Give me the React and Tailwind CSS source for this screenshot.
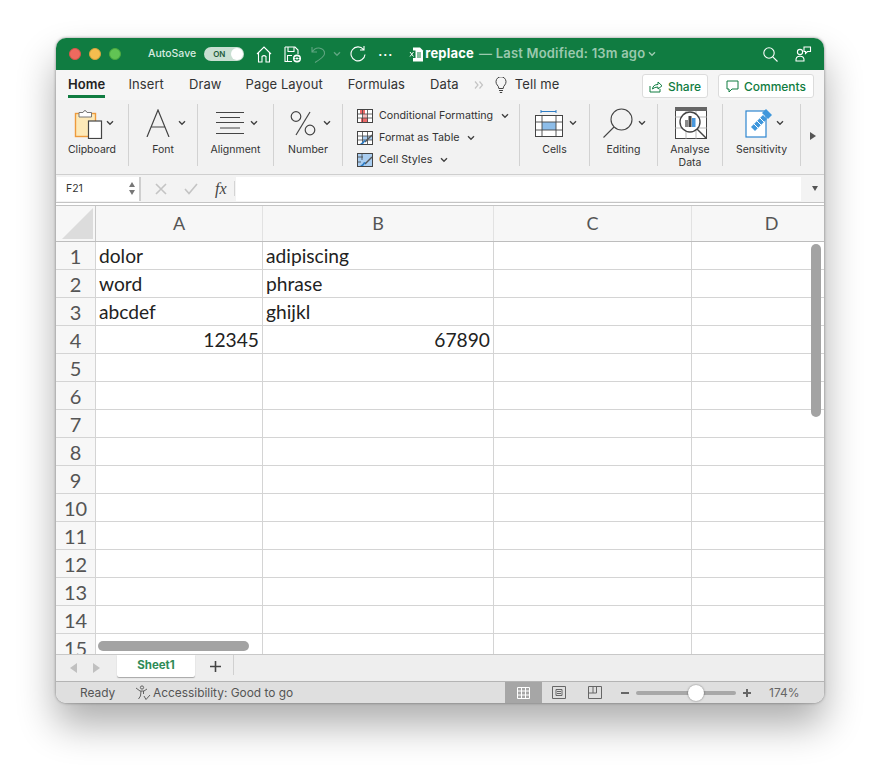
import React from 'react';

const cols = ['A', 'B', 'C', 'D'];
const gridCols = 'grid grid-cols-[40px_167px_231px_198px_160px] grid-rows-[1fr]';

const rows = [
  ['dolor', 'adipiscing'],
  ['word', 'phrase'],
  ['abcdef', 'ghijkl'],
  ['12345', '67890'],
];

const Chevron = ({ className = '', color = '#444' }) => (
  <svg width="8" height="6" viewBox="0 0 8 6" className={className}>
    <path d="M1 1.2 L4 4.2 L7 1.2" fill="none" stroke={color} strokeWidth="1.4" />
  </svg>
);

const HomeIcon = () => (
  <svg width="16" height="17" viewBox="0 0 16 17" fill="none" stroke="#fff" strokeWidth="1.1">
    <path d="M1 8 L8 1 L15 8 M2.5 7 V16 H6 V10.5 Q8 8.8 10 10.5 V16 H13.5 V7" />
  </svg>
);

const SaveIcon = () => (
  <svg width="18" height="17" viewBox="0 0 18 17" fill="none" stroke="#fff" strokeWidth="1.1">
    <path d="M1 1 H11 L14 4 V8 M8 15.5 H1 V1 M4 1 V5.5 H10 V1 M3.5 15.5 V9.5 H8" />
    <circle cx="13" cy="12.5" r="4" fill="#fff" stroke="none" />
    <path d="M10.8 12 Q13 9.8 15.2 12 M15.2 13 Q13 15.2 10.8 13" stroke="#107c41" />
  </svg>
);

const UndoIcon = () => (
  <svg width="15" height="17" viewBox="0 0 15 17" fill="none" stroke="#5fa581" strokeWidth="1.1">
    <path d="M1 1 V6 H6 M1 6 Q4 1.5 8 2 Q14 3 13.5 8 Q13 11 4 16.5" />
  </svg>
);

const RedoIcon = () => (
  <svg width="16" height="16" viewBox="0 0 16 16" fill="none" stroke="#fff" strokeWidth="1.1">
    <path d="M13.5 3.5 A7 7 0 1 0 15 8.5 M14 0 V4 H10" />
  </svg>
);

const FileIcon = () => (
  <svg width="16" height="15" viewBox="0 0 16 15">
    <path d="M5 0.5 H12 L15 3.5 V14.5 H5 Z" fill="#fff" />
    <rect x="0.5" y="3.5" width="7" height="7.5" fill="#107c41" />
    <path d="M2 5 L5.5 9.5 M5.5 5 L2 9.5" stroke="#fff" strokeWidth="1" />
    <path d="M9 6 H13 M9 8 H13 M9 10 H13" stroke="#107c41" strokeWidth="1" />
  </svg>
);

const SearchIcon = () => (
  <svg width="15" height="15" viewBox="0 0 15 15" fill="none" stroke="#fff" strokeWidth="1.1">
    <circle cx="6" cy="6" r="5.2" />
    <path d="M9.8 9.8 L14.5 14.5" />
  </svg>
);

const PeopleIcon = () => (
  <svg width="17" height="16" viewBox="0 0 17 16" fill="none" stroke="#fff" strokeWidth="1.1">
    <circle cx="5" cy="6" r="2.6" />
    <path d="M1 15 Q0.5 10.2 5 10.2 Q9.5 10.2 9 15 Z" />
    <path d="M9 1 H15.5 V5.5 H12.5 L10.5 7.5 V5.5 H9 Z" fill="#107c41" />
  </svg>
);

const BulbIcon = () => (
  <svg width="12" height="17" viewBox="0 0 12 17" fill="none" stroke="#444" strokeWidth="1">
    <path d="M3.8 11.5 Q3.8 9.5 2.2 8 A5 5 0 1 1 9.8 8 Q8.2 9.5 8.2 11.5 Z M4 13.5 H8 M4.8 15.5 H7.2" />
  </svg>
);

const DoubleChevron = () => (
  <svg width="10" height="8" viewBox="0 0 10 8" fill="none" stroke="#c4c4c4" strokeWidth="1.2">
    <path d="M1 0.5 L4 4 L1 7.5 M5.5 0.5 L8.5 4 L5.5 7.5" />
  </svg>
);

const ShareIcon = () => (
  <svg width="14" height="13" viewBox="0 0 14 13" fill="none" stroke="#107c41" strokeWidth="1">
    <path d="M1 6 V12 H11 V9 M3.5 9 Q4 4.5 9 4.5 V2 L13 5.8 L9 9 V7 Q5.5 7 3.5 9 Z" />
  </svg>
);

const CommentIcon = () => (
  <svg width="13" height="13" viewBox="0 0 13 13" fill="none" stroke="#107c41" strokeWidth="1">
    <path d="M1 1 H12 V9 H6 L3 12 V9 H1 Z" />
  </svg>
);

const ClipboardIcon = () => (
  <svg width="32" height="32" viewBox="0 0 32 32">
    <rect x="1.5" y="6.5" width="20" height="23" fill="#fde9b8" stroke="#ed9a3c" strokeWidth="1.4" />
    <path d="M5 10 V5.5 H9 Q11 1.5 13 5.5 H17.5 V10 Z" fill="#fff" stroke="#777" strokeWidth="1" />
    <rect x="14.5" y="14" width="13" height="17.5" fill="#fff" stroke="#444" strokeWidth="1.2" />
  </svg>
);

const FontIcon = () => (
  <svg width="24" height="28" viewBox="0 0 24 28" fill="none" stroke="#444" strokeWidth="1.2">
    <path d="M1 28 L12 1 L23 28 M5 18 H19" />
  </svg>
);

const AlignIcon = () => (
  <svg width="29" height="22" viewBox="0 0 29 22" fill="none" stroke="#444" strokeWidth="1">
    <path d="M0 0.5 H28 M4 5.5 H24 M0 10.5 H28 M4 16 H24 M0 21.5 H28" />
  </svg>
);

const PercentIcon = () => (
  <svg width="26" height="26" viewBox="0 0 26 26" fill="none" stroke="#444" strokeWidth="1.2">
    <circle cx="6" cy="6.5" r="4.8" />
    <circle cx="20" cy="20" r="4.8" />
    <path d="M20 2 L6 25" />
  </svg>
);

const ConditionalIcon = () => (
  <svg width="16" height="14" viewBox="0 0 16 14">
    <rect x="0.5" y="0.5" width="15" height="13" fill="#fff" stroke="#444" />
    <rect x="3" y="1" width="5" height="4" fill="#ee6a6a" />
    <rect x="6" y="5" width="4" height="4" fill="#f8b9b9" />
    <rect x="4" y="9" width="7" height="4" fill="#ee6a6a" />
    <path d="M5.5 0 V14 M10.5 0 V14 M0 5 H16 M0 9 H16" stroke="#444" strokeWidth="0.8" />
  </svg>
);

const TableStyleIcon = ({ fill = false }) => (
  <svg width="16" height="14" viewBox="0 0 16 14">
    <rect x="0.5" y="0.5" width="15" height="13" fill={fill ? '#a9cdf0' : '#fff'} stroke="#444" />
    {!fill && <rect x="5" y="5" width="10" height="4" fill="#a9cdf0" />}
    {!fill && <path d="M5.5 0 V14 M10.5 0 V14 M0 5 H16 M0 9 H16" stroke="#444" strokeWidth="0.8" />}
    {fill && <path d="M0 4 H6 M0 9 H4 M5 0 V7" stroke="#444" strokeWidth="0.8" />}
    <path d="M15 4 L8 11" stroke="#555" strokeWidth="1.4" />
    <path d="M9 9.5 L6 13 H3 Q6 11 7 9 Z" fill="#2e7cc4" />
  </svg>
);

const CellsIcon = () => (
  <svg width="28" height="27" viewBox="0 0 28 27" fill="none">
    <path d="M6 1.5 H21 M6 0 V3 M21 0 V3" stroke="#2e7cc4" strokeWidth="1" />
    <rect x="0.5" y="5.5" width="27" height="21" fill="#fff" stroke="#444" />
    <rect x="7" y="12" width="14" height="8" fill="#8dbde9" />
    <path d="M7 5 V27 M21 5 V27 M0 12 H28 M0 20 H28" stroke="#444" strokeWidth="0.9" />
  </svg>
);

const MagnifierIcon = () => (
  <svg width="32" height="30" viewBox="0 0 32 30" fill="none" stroke="#444" strokeWidth="1.1">
    <circle cx="18.5" cy="11.5" r="10.5" />
    <path d="M11 19 L0.5 29.5" />
  </svg>
);

const AnalyseIcon = () => (
  <svg width="32" height="32" viewBox="0 0 32 32" fill="none">
    <rect x="0.5" y="0.5" width="31" height="31" fill="#fff" stroke="#444" />
    <rect x="0" y="0" width="32" height="4" fill="#666" />
    <path d="M11 4 V32 M21 4 V32 M0 10 H32 M0 21 H32" stroke="#aaa" strokeWidth="0.8" />
    <circle cx="15" cy="15" r="10" fill="#fff" stroke="#444" strokeWidth="1.4" />
    <rect x="10" y="13" width="3" height="7" fill="#888" />
    <rect x="13.5" y="9" width="3" height="11" fill="#444" />
    <rect x="17" y="11" width="3.5" height="9" fill="#4a98dc" />
    <path d="M22 22 L31 31" stroke="#444" strokeWidth="1.4" />
  </svg>
);

const SensitivityIcon = () => (
  <svg width="28" height="30" viewBox="0 0 28 30" fill="none">
    <rect x="1" y="3" width="20" height="26" fill="#fff" stroke="#2e86d0" strokeWidth="1.2" />
    <path d="M6 19 L18 7 L22 11 L10 23 Z" fill="#3f97dc" />
    <path d="M9 16 L13 20 M12 13 L16 17 M15 10 L19 14" stroke="#fff" strokeWidth="1" />
    <path d="M17 5 L21 1 L27 7 L23 11 Z" fill="#3f97dc" />
  </svg>
);

const RibbonGroup = ({ width, label, icon, iconClass = '', chevronClass, children, labelClass = '' }) => (
  <div className={`${width} h-[62px] mt-1 border-r border-[#d2d2d2] shrink-0 flex flex-col items-center`}>
    {children || (
      <>
        <div className={`h-[38px] shrink-0 w-full flex items-center ${iconClass}`}>
          {icon}
          {chevronClass !== 'none' && <Chevron className={chevronClass} />}
        </div>
        <div className={`shrink-0 text-[10.5px] leading-[13px] text-center text-[#333] mt-[1px] ${labelClass}`}>{label}</div>
      </>
    )}
  </div>
);

const StyleRow = ({ icon, label }) => (
  <div className="flex items-center h-[22px]">
    {icon}
    <span className="ml-[6px] mr-[8px] text-[10.7px] text-[#333]">{label}</span>
    <Chevron />
  </div>
);

const App = () => {
  return (
    <div className="w-[880px] h-[777px] bg-white pl-[56px] pt-[38px] font-['Inter','Liberation_Sans',sans-serif]">
      <div className="relative w-[768px] h-[665px] rounded-[10px] overflow-hidden bg-white flex flex-col shadow-[0_22px_38px_rgba(0,0,0,0.32),0_0_3px_rgba(0,0,0,0.45)]">
        {/* title bar */}
        <div className="h-[32px] shrink-0 bg-[#107c41] flex items-center pl-[13px]">
          <span className="w-3 h-3 rounded-full bg-[#ee6a5f] border border-[#d9544a]" />
          <span className="w-3 h-3 rounded-full bg-[#f5bd4f] border border-[#d9a23e] ml-2" />
          <span className="w-3 h-3 rounded-full bg-[#61c454] border border-[#4ca93f] ml-2" />
          <span className="ml-[27px] text-[10.5px] font-medium text-[#d8ebe0]">AutoSave</span>
          <div className="ml-[8px] w-[40px] h-[14px] rounded-full bg-[#c9dfd2] flex items-center justify-between pl-[9px] pr-[1px]">
            <span className="text-[8px] font-semibold text-[#1d5b3a]">ON</span>
            <span className="w-[12px] h-[12px] rounded-full bg-white" />
          </div>
          <span className="ml-[12px] flex"><HomeIcon /></span>
          <span className="ml-[12px] flex"><SaveIcon /></span>
          <span className="ml-[9px] flex"><UndoIcon /></span>
          <Chevron className="ml-[7px]" color="#5fa581" />
          <span className="ml-[9px] flex"><RedoIcon /></span>
          <span className="ml-[12px] text-white text-[12px] font-bold tracking-[1px] leading-none mb-[4px]">...</span>
          <span className="ml-[15px] flex"><FileIcon /></span>
          <span className="ml-[1px] text-[13px] tracking-[0.2px] font-bold text-white">replace</span>
          <span className="ml-[5px] text-[13px] tracking-[0.2px] font-semibold text-[#9bc9ae]">— Last Modified: 13m ago</span>
          <Chevron className="ml-[3px]" color="#9bc9ae" />
          <span className="ml-auto flex"><SearchIcon /></span>
          <span className="ml-[17px] mr-[12px] flex"><PeopleIcon /></span>
        </div>

        {/* tabs */}
        <div className="h-[30px] shrink-0 bg-[#f5f5f5] flex items-center pl-[12px] relative text-[13px] tracking-[0.1px] text-[#333]">
          <span className="font-semibold text-[#222] relative">
            Home
            <span className="absolute left-0 right-0 -bottom-[3px] h-[3px] bg-[#107c41]" />
          </span>
          <span className="ml-[23px]">Insert</span>
          <span className="ml-[25px]">Draw</span>
          <span className="ml-[24px]">Page Layout</span>
          <span className="ml-[25px]">Formulas</span>
          <span className="ml-[25px]">Data</span>
          <span className="ml-[15px] flex"><DoubleChevron /></span>
          <span className="ml-[11px] flex"><BulbIcon /></span>
          <span className="ml-[8px]">Tell me</span>
          <div className="ml-auto flex items-center gap-[10px] mr-[10px] mt-[2px] tracking-normal">
            <div className="w-[66px] h-[24px] pt-[1px] bg-white border border-[#dcdcdc] rounded-[3px] flex items-center justify-center gap-[5px] text-[12px] font-medium text-[#107c41]">
              <ShareIcon />
              Share
            </div>
            <div className="w-[96px] h-[24px] pt-[1px] bg-white border border-[#dcdcdc] rounded-[3px] flex items-center justify-center gap-[5px] text-[12px] font-medium text-[#107c41]">
              <CommentIcon />
              Comments
            </div>
          </div>
        </div>

        {/* ribbon */}
        <div className="h-[75px] shrink-0 bg-[#f2f2f2] flex border-b border-[#cfcfcf]">
          <RibbonGroup width="w-[73px]" label="Clipboard" icon={<ClipboardIcon />} iconClass="pl-[18px]" chevronClass="" />
          <RibbonGroup width="w-[69px]" label="Font" icon={<FontIcon />} iconClass="pl-[17px]" chevronClass="ml-[8px]" />
          <RibbonGroup width="w-[76px]" label="Alignment" icon={<AlignIcon />} iconClass="pl-[18px]" chevronClass="ml-[5px]" />
          <RibbonGroup width="w-[69px]" label="Number" icon={<PercentIcon />} iconClass="pl-[16px]" chevronClass="ml-[7px]" />
          <RibbonGroup width="w-[177px]">
            <div className="w-full pl-[14px] pt-[1px]">
              <StyleRow icon={<ConditionalIcon />} label="Conditional Formatting" />
              <StyleRow icon={<TableStyleIcon />} label="Format as Table" />
              <StyleRow icon={<TableStyleIcon fill />} label="Cell Styles" />
            </div>
          </RibbonGroup>
          <RibbonGroup width="w-[70px]" label="Cells" icon={<CellsIcon />} iconClass="pl-[15px]" chevronClass="ml-[6px]" />
          <RibbonGroup width="w-[68px]" label="Editing" icon={<MagnifierIcon />} iconClass="pl-[13px]" chevronClass="ml-[3px]" />
          <RibbonGroup width="w-[65px]" label="Analyse Data" icon={<AnalyseIcon />} iconClass="pl-[17px]" chevronClass="none" labelClass="w-[50px]" />
          <RibbonGroup width="w-[78px]" label="Sensitivity" icon={<SensitivityIcon />} iconClass="pl-[22px]" chevronClass="ml-[3px]" />
          <div className="flex-1 flex items-center justify-center pb-[2px]">
            <span className="w-0 h-0 border-y-[4px] border-y-transparent border-l-[6px] border-l-[#555]" />
          </div>
        </div>

        {/* formula bar */}
        <div className="h-[27px] shrink-0 bg-[#f3f3f3] flex items-center pl-[1px]">
          <div className="w-[84px] h-[24px] bg-white border-r-2 border-[#cfcfcf] flex items-center justify-between pl-[9px] pr-[4px]">
            <span className="text-[10.5px] text-[#333]">F21</span>
            <div className="flex flex-col gap-[3px]">
              <span className="w-0 h-0 border-x-[3.5px] border-x-transparent border-b-[5px] border-b-[#777]" />
              <span className="w-0 h-0 border-x-[3.5px] border-x-transparent border-t-[5px] border-t-[#777]" />
            </div>
          </div>
          <svg width="12" height="12" viewBox="0 0 12 12" className="ml-[14px]" stroke="#c4c4c4" strokeWidth="1.6">
            <path d="M1 1 L11 11 M11 1 L1 11" />
          </svg>
          <svg width="14" height="12" viewBox="0 0 14 12" className="ml-[17px]" stroke="#c4c4c4" strokeWidth="1.6" fill="none">
            <path d="M1 6 L5 10.5 L13 1" />
          </svg>
          <span className="ml-[17px] w-[16px] text-[16px] italic text-[#444] font-['Liberation_Serif',serif]">fx</span>
          <span className="ml-[3px] w-px h-[15px] bg-[#d4d4d4]" />
          <div className="ml-[1px] w-[565px] h-[24px] bg-white" />
          <span className="ml-[11px] w-0 h-0 border-x-[3.5px] border-x-transparent border-t-[5px] border-t-[#555]" />
        </div>

        {/* sheet */}
        <div className="h-[2px] shrink-0 border-y border-[#c4c4c4] bg-white box-content" />
        <div className={`${gridCols} h-[36px] shrink-0 bg-[#f7f7f7] border-b border-[#bdbdbd]`}>
          <div className="border-r border-[#c8c8c8] relative">
            <span className="absolute right-[2px] bottom-[2px] w-0 h-0 border-l-[31px] border-l-transparent border-b-[31px] border-b-[#dcdcdc]" />
          </div>
          {cols.map((col) => (
            <div key={col} className="border-r border-[#e2e2e2] flex items-center justify-center text-[18px] text-[#555] font-['Lato',sans-serif]">
              {col}
            </div>
          ))}
        </div>
        <div className="relative h-[412px] shrink-0 overflow-hidden">
          {Array.from({ length: 15 }, (_, i) => {
            const row = rows[i] || [];
            const numeric = i === 3;
            return (
              <div key={i} className={`${gridCols} h-[28px] font-['Lato',sans-serif] text-[19.2px] leading-none text-[#222]`}>
                <div className="border-r border-b border-[#d4d4d4] bg-[#f7f7f7] flex items-center justify-center pt-[1px] text-[20px] text-[#555]">{i + 1}</div>
                <div className={`border-r border-b border-[#d4d4d4] flex items-center px-[3px] ${numeric ? 'justify-end' : ''}`}>{row[0]}</div>
                <div className={`border-r border-b border-[#d4d4d4] flex items-center px-[3px] ${numeric ? 'justify-end' : ''}`}>{row[1]}</div>
                <div className="border-r border-b border-[#d4d4d4]" />
                <div className="border-b border-[#d4d4d4]" />
              </div>
            );
          })}
          <div className="absolute left-[42px] bottom-[3px] w-[151px] h-[10px] rounded-full bg-[#a3a3a3]" />
          <div className="absolute right-[3px] top-[2px] w-[10px] h-[173px] rounded-full bg-[#a3a3a3]" />
        </div>

        {/* sheet tabs */}
        <div className="h-[27px] shrink-0 bg-[#eeeeee] border-t border-[#c8c8c8] flex items-start">
          <span className="ml-[14px] mt-[8px] w-0 h-0 border-y-[5px] border-y-transparent border-r-[7px] border-r-[#c0c0c0]" />
          <span className="ml-[16px] mt-[8px] w-0 h-0 border-y-[5px] border-y-transparent border-l-[7px] border-l-[#c0c0c0]" />
          <div className="ml-[17px] w-[78px] h-[22px] bg-white rounded-b-[2px] shadow-[0_1px_1px_rgba(0,0,0,0.3)] flex items-center justify-center text-[11.5px] font-bold text-[#2e8b57]">Sheet1</div>
          <svg width="11" height="11" viewBox="0 0 11 11" className="ml-[15px] mt-[6px]" stroke="#444" strokeWidth="1.6">
            <path d="M5.5 0 V11 M0 5.5 H11" />
          </svg>
          <span className="ml-[12px] w-px h-[20px] bg-[#d0d0d0]" />
        </div>

        {/* status bar */}
        <div className="h-[22px] shrink-0 bg-[#dfdfdf] border-t border-[#b4b4b4] flex items-center text-[11.9px] text-[#555]">
          <span className="ml-[24px] w-[34px]">Ready</span>
          <svg width="16" height="16" viewBox="0 0 16 16" className="ml-[21px]" fill="none" stroke="#555" strokeWidth="0.9">
            <circle cx="7" cy="2.5" r="1.6" />
            <path d="M1 3 L5 6 H9 L12 4 M6 6 L5.5 11 L3.5 14 M8.5 6 L8.5 9 M9 11 L11 14.5 L15 10" />
          </svg>
          <span className="ml-[2px] w-[141px] whitespace-nowrap">Accessibility: Good to go</span>
          <div className="ml-[211px] w-[37px] h-[22px] bg-[#a6a6a6] flex items-center justify-center">
            <svg width="13" height="12" viewBox="0 0 13 12" stroke="#fff" strokeWidth="1" fill="none">
              <path d="M0.5 0.5 H12.5 V11.5 H0.5 Z M4.5 0 V12 M8.5 0 V12 M0 4 H13 M0 8 H13" />
            </svg>
          </div>
          <svg width="14" height="13" viewBox="0 0 14 13" className="ml-[10px]" stroke="#666" strokeWidth="1" fill="none">
            <path d="M0.5 0.5 H13.5 V12.5 H0.5 Z M4 3.5 H10 V9.5 H4 Z M5 5.5 H9 M5 7.5 H9" />
          </svg>
          <svg width="14" height="13" viewBox="0 0 14 13" className="ml-[22px]" stroke="#666" strokeWidth="1" fill="none">
            <path d="M0.5 0.5 H13.5 V12.5 H0.5 Z M0.5 7 H8.5 V0.5 M5 0.5 V7" />
          </svg>
          <span className="ml-[19px] w-[8px] h-[2px] bg-[#666]" />
          <div className="relative w-[100px] h-[4px] ml-[7px] rounded-full bg-[#a8a8a8]">
            <span className="absolute left-[52px] -top-[6px] w-[16px] h-[16px] rounded-full bg-white shadow-[0_0_2px_rgba(0,0,0,0.5)]" />
          </div>
          <svg width="8" height="8" viewBox="0 0 8 8" className="ml-[7px]" stroke="#666" strokeWidth="2">
            <path d="M4 0 V8 M0 4 H8" />
          </svg>
          <span className="ml-[18px] text-[12px] text-[#666]">174%</span>
        </div>
      </div>
    </div>
  );
};

export default App;
